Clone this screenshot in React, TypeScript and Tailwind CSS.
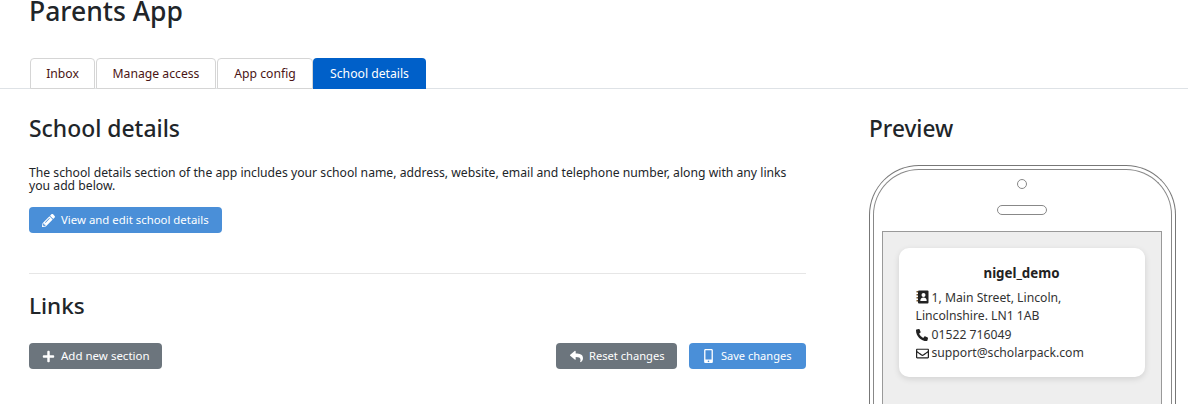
import { FaPencilAlt, FaPlus, FaReply, FaMobileAlt, FaPhoneAlt, FaRegEnvelope } from "react-icons/fa";

const font = { fontFamily: '"Noto Sans", sans-serif' };

function Tab({ label, active, w }: { label: string; active?: boolean; w: string }) {
  return (
    <div
      className={
        active
          ? `${w} h-[31px] pt-px flex items-center justify-center rounded-t-[4px] bg-[#0060c9] text-white text-[12.2px]`
          : `${w} h-[31px] pt-px flex items-center justify-center rounded-t-[4px] border border-[#d5d5d5] bg-white text-[#4a1414] text-[12.2px]`
      }
    >
      {label}
    </div>
  );
}

function Btn({ icon, label, className }: { icon: React.ReactNode; label: string; className: string }) {
  return (
    <div className={`h-[26px] flex items-center rounded-[4px] text-white ${className}`}>
      {icon}
      <span>{label}</span>
    </div>
  );
}

function Notebook() {
  return (
    <svg viewBox="0 0 13 14" className="inline-block w-[13px] h-[14px] align-[-2px] mr-[3px]">
      <rect x="2" y="0.5" width="10.5" height="13" rx="1" fill="#222" />
      <rect x="0.5" y="1" width="1.5" height="1.5" fill="#7a5a30" />
      <rect x="0.5" y="4" width="1.5" height="1.5" fill="#7a5a30" />
      <rect x="0.5" y="7" width="1.5" height="1.5" fill="#7a5a30" />
      <rect x="0.5" y="10" width="1.5" height="1.5" fill="#7a5a30" />
      <circle cx="7.5" cy="5" r="2" fill="#fff" />
      <path d="M4.3 11 C4.3 8.4 5.8 7.6 7.5 7.6 C9.2 7.6 10.7 8.4 10.7 11 Z" fill="#fff" />
    </svg>
  );
}

export default function App() {
  return (
    <div style={font} className="w-[1188px] h-[404px] overflow-hidden bg-white text-[#212529]">
      <h1 className="pl-[29px] -mt-[6px] h-[64px] text-[26.5px] leading-[34px] font-medium">Parents App</h1>
      <div className="flex pl-[30px] h-[31px] border-b border-[#dee2e6] gap-px">
        <Tab label="Inbox" w="w-[65px]" />
        <Tab label="Manage access" w="w-[120px]" />
        <Tab label="App config" w="w-[96px]" />
        <div className="-ml-px">
          <Tab label="School details" active w="w-[113px]" />
        </div>
      </div>
      <div className="flex pl-[29px]">
        <div className="w-[777px]">
          <h2 className="mt-[25px] text-[22.9px] leading-[30px] font-medium">School details</h2>
          <p className="mt-[22px] text-[12.2px] leading-[13px]">
            The school details section of the app includes your school name, address, website, email and telephone number, along with any links you add below.
          </p>
          <Btn
            icon={<FaPencilAlt className="w-[13px] h-[13px]" />}
            label="View and edit school details"
            className="mt-[15px] w-[193px] pl-[13px] gap-[6px] text-[11.4px] bg-[#4a8fd8]"
          />
          <div className="mt-[40px] border-t border-[#e6e6e6]" />
          <h2 className="mt-[17px] text-[22.5px] leading-[30px] font-medium">Links</h2>
          <div className="mt-[22px] flex">
            <Btn
              icon={<FaPlus className="w-[13px] h-[13px]" />}
              label="Add new section"
              className="w-[133px] pl-[13px] gap-[6px] text-[11.5px] bg-[#6c757d]"
            />
            <div className="ml-auto flex gap-[12px]">
              <Btn
                icon={<FaReply className="w-[13px] h-[13px]" />}
                label="Reset changes"
                className="w-[121px] pl-[14px] gap-[6px] text-[11.15px] bg-[#6c757d]"
              />
              <Btn
                icon={<FaMobileAlt className="w-[13px] h-[14px]" />}
                label="Save changes"
                className="w-[117px] pl-[13px] gap-[6px] text-[11.05px] bg-[#4a8fd8]"
              />
            </div>
          </div>
        </div>
        <div className="ml-[63px] w-[307px]">
          <h2 className="mt-[25px] text-[22.6px] leading-[30px] font-medium">Preview</h2>
          <div className="mt-[21px] h-[300px] rounded-t-[50px] border border-b-0 border-[#777] p-[3px] pb-0">
            <div className="h-full pr-[2px] rounded-t-[46px] border border-b-0 border-[#888] flex flex-col items-center">
              <div className="mt-[9px] w-[10px] h-[10px] rounded-full border border-[#888]" />
              <div className="mt-[16px] w-[50px] h-[10px] rounded-full border border-[#888]" />
              <div className="mt-[16px] w-[280px] h-[240px] border border-[#999] bg-[#eeeeee] px-[16px] pt-[16px]">
                <div className="h-[129px] rounded-[10px] bg-white shadow-[0_2px_6px_rgba(0,0,0,0.12)] pl-[17px] pr-[16px] pt-[16px] text-[12.2px] leading-[18.5px] text-[#333]">
                  <div className="text-center font-bold text-[13.3px] leading-[18px] text-[#222] -ml-px">nigel_demo</div>
                  <div className="mt-[6px] pt-px">
                    <Notebook />
                    1, Main Street, Lincoln, Lincolnshire. LN1 1AB
                  </div>
                  <div className="flex items-center gap-[4px]">
                    <FaPhoneAlt className="w-[12px] h-[12px] text-[#222]" />
                    01522 716049
                  </div>
                  <div className="flex items-center gap-[3px]">
                    <FaRegEnvelope className="w-[13px] h-[13px] text-[#222]" />
                    support@scholarpack.com
                  </div>
                </div>
              </div>
            </div>
          </div>
        </div>
      </div>
    </div>
  );
}
